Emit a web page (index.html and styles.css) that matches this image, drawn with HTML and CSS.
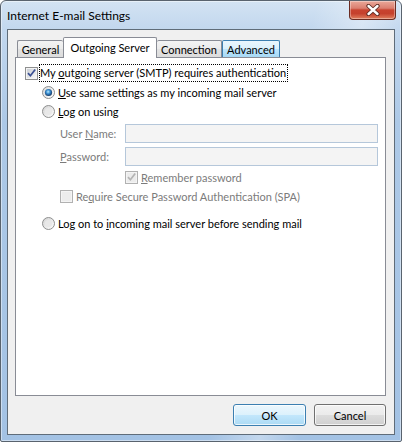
FILE: index.html
```html
<!DOCTYPE html>
<html lang="en">
<head>
    <meta charset="UTF-8">
    <title>Internet E-mail Settings</title>
    <link rel="stylesheet" href="styles.css">
</head>
<body>
    <div class="window">
        <div class="titlebar">
            <span class="title">Internet E-mail Settings</span>
            <div class="close-btn">
                <svg width="16" height="12" viewBox="0 0 16 12">
                    <path d="M3.5 2 L12.5 10 M12.5 2 L3.5 10" stroke="#5a2a22" stroke-width="4.2" stroke-linecap="round" fill="none"/>
                    <path d="M3.5 2 L12.5 10 M12.5 2 L3.5 10" stroke="#ffffff" stroke-width="2.4" stroke-linecap="round" fill="none"/>
                </svg>
            </div>
        </div>

        <div class="client">
            <div class="tabs">
                <div class="tab tab-general">General</div>
                <div class="tab tab-active">Outgoing Server</div>
                <div class="tab tab-connection">Connection</div>
                <div class="tab tab-hover">Advanced</div>
            </div>

            <div class="panel">
                <div class="row row-auth">
                    <svg class="check" width="13" height="13" viewBox="0 0 13 13">
                        <defs>
                            <linearGradient id="cb1" x1="0" y1="0" x2="1" y2="1">
                                <stop offset="0" stop-color="#cbcfd5"/>
                                <stop offset="1" stop-color="#f6f6f6"/>
                            </linearGradient>
                        </defs>
                        <rect x="0.5" y="0.5" width="12" height="12" fill="#f4f4f4" stroke="#8e8f8f"/>
                        <rect x="2" y="2" width="9" height="9" fill="url(#cb1)"/>
                        <path d="M3 6.2 L5.4 8.8 L10.2 2.6" stroke="#3a4f93" stroke-width="1.7" fill="none"/>
                    </svg>
                    <span class="label focus">My <u>o</u>utgoing server (SMTP) requires authentication</span>
                </div>

                <div class="row row-radio row-same">
                    <svg class="radio" width="13" height="13" viewBox="0 0 13 13">
                        <defs>
                            <linearGradient id="rb1" x1="0" y1="0" x2="1" y2="1">
                                <stop offset="0" stop-color="#d8d8d8"/>
                                <stop offset="1" stop-color="#ffffff"/>
                            </linearGradient>
                            <radialGradient id="rd1" cx="0.45" cy="0.4" r="0.6">
                                <stop offset="0" stop-color="#b9ecff"/>
                                <stop offset="0.45" stop-color="#3a8fd2"/>
                                <stop offset="1" stop-color="#12335e"/>
                            </radialGradient>
                        </defs>
                        <circle cx="6.5" cy="6.5" r="6" fill="url(#rb1)" stroke="#8e8f8f"/>
                        <circle cx="6.5" cy="6.5" r="3.6" fill="url(#rd1)"/>
                    </svg>
                    <span class="label"><u>U</u>se same settings as my incoming mail server</span>
                </div>

                <div class="row row-radio row-logon">
                    <svg class="radio" width="13" height="13" viewBox="0 0 13 13">
                        <defs>
                            <linearGradient id="rb2" x1="0" y1="0" x2="1" y2="1">
                                <stop offset="0" stop-color="#d2d2d2"/>
                                <stop offset="1" stop-color="#ffffff"/>
                            </linearGradient>
                        </defs>
                        <circle cx="6.5" cy="6.5" r="6" fill="url(#rb2)" stroke="#8e8f8f"/>
                        <circle cx="6.5" cy="6.5" r="3.6" fill="#e8e8e8"/>
                    </svg>
                    <span class="label"><u>L</u>og on using</span>
                </div>

                <div class="row row-field row-user">
                    <span class="field-label disabled">User <u>N</u>ame:</span>
                    <div class="textbox"></div>
                </div>

                <div class="row row-field row-pass">
                    <span class="field-label disabled"><u>P</u>assword:</span>
                    <div class="textbox"></div>
                </div>

                <div class="row row-remember">
                    <svg class="check" width="13" height="13" viewBox="0 0 13 13">
                        <rect x="0.5" y="0.5" width="12" height="12" fill="#f4f4f4" stroke="#b1b1b1"/>
                        <rect x="2" y="2" width="9" height="9" fill="#ececec"/>
                        <path d="M3 6.2 L5.4 8.8 L10.2 2.6" stroke="#b4b4b4" stroke-width="1.7" fill="none"/>
                    </svg>
                    <span class="label disabled"><u>R</u>emember password</span>
                </div>

                <div class="row row-spa">
                    <svg class="check" width="13" height="13" viewBox="0 0 13 13">
                        <rect x="0.5" y="0.5" width="12" height="12" fill="#f4f4f4" stroke="#b1b1b1"/>
                        <rect x="2" y="2" width="9" height="9" fill="#ececec"/>
                    </svg>
                    <span class="label disabled">Re<u>q</u>uire Secure Password Authentication (SPA)</span>
                </div>

                <div class="row row-radio row-before">
                    <svg class="radio" width="13" height="13" viewBox="0 0 13 13">
                        <defs>
                            <linearGradient id="rb3" x1="0" y1="0" x2="1" y2="1">
                                <stop offset="0" stop-color="#d2d2d2"/>
                                <stop offset="1" stop-color="#ffffff"/>
                            </linearGradient>
                        </defs>
                        <circle cx="6.5" cy="6.5" r="6" fill="url(#rb3)" stroke="#8e8f8f"/>
                        <circle cx="6.5" cy="6.5" r="3.6" fill="#e8e8e8"/>
                    </svg>
                    <span class="label">Log on to <u>i</u>ncoming mail server before sending mail</span>
                </div>
            </div>

            <div class="buttons">
                <button class="btn btn-default">OK</button>
                <button class="btn btn-cancel">Cancel</button>
            </div>
        </div>
    </div>
</body>
</html>
```
FILE: styles.css
```css
body {
    margin: 0;
    padding: 0;
    background: #ffffff;
    font-family: Lato, "Liberation Sans", sans-serif;
    font-size: 11px;
    color: #000;
}

.window {
    width: 402px;
    height: 442px;
    box-sizing: border-box;
    border: 1px solid #59636e;
    border-radius: 6px 6px 2px 2px;
    padding: 0 6px 6px 6px;
    background:
        linear-gradient(104deg, rgba(255,255,255,0) 62%, rgba(255,255,255,0.35) 72%, rgba(255,255,255,0) 80%),
        linear-gradient(to bottom, #d3e3f3 0, #c2d7ee 28px, #adc9e7 120px, #a3c2e4 100%);
    box-shadow: inset 0 0 0 1px rgba(255,255,255,0.45);
}

.titlebar {
    height: 28px;
    display: flex;
    justify-content: space-between;
    align-items: flex-start;
}

.title {
    font-size: 12px;
    padding-top: 7px;
    color: #000;
}

.close-btn {
    width: 47px;
    height: 19px;
    box-sizing: border-box;
    border: 1px solid #6b2c22;
    border-top: none;
    border-radius: 0 0 4px 4px;
    background: linear-gradient(to bottom, #eaa899 0, #db7f70 40%, #c8432f 50%, #c5412d 70%, #e0805f 100%);
    box-shadow: inset 0 0 0 1px rgba(255,255,255,0.35);
    display: flex;
    align-items: center;
    justify-content: center;
    margin-right: -1px;
}

.client {
    width: 388px;
    height: 406px;
    box-sizing: border-box;
    border: 1px solid #5f6c79;
    background: #f0f0f0;
    padding: 7px 8px 0 7px;
}

.tabs {
    display: flex;
    align-items: flex-end;
    height: 20px;
    padding-left: 2px;
}

.tab {
    height: 17px;
    box-sizing: border-box;
    border: 1px solid #898c95;
    border-bottom: none;
    border-radius: 2px 2px 0 0;
    background: linear-gradient(to bottom, #f3f3f3 0, #ebebeb 50%, #e3e3e3 50%, #dcdcdc 100%);
    display: flex;
    align-items: center;
    justify-content: center;
}

.tab-general {
    width: 46px;
    border-right: none;
}

.tab-active {
    width: 94px;
    height: 21px;
    margin-bottom: -1px;
    background: #fff;
    position: relative;
    z-index: 1;
    padding-bottom: 2px;
}

.tab-connection {
    width: 65px;
    border-left: none;
}

.tab-hover {
    width: 58px;
    border-color: #3c7fb1;
    background: linear-gradient(to bottom, #eaf6fd 0, #d9f0fc 50%, #bee6fd 50%, #a7d9f5 100%);
}

.panel {
    height: 339px;
    box-sizing: border-box;
    border: 1px solid #898c95;
    background: #fff;
    padding-top: 6px;
}

.row {
    display: flex;
    align-items: center;
    height: 19px;
}

.row-auth {
    padding-left: 9px;
}

.row-auth .check {
    margin-right: 1px;
}

.row-radio {
    padding-left: 26px;
}

.row-radio .radio {
    margin-right: 3px;
}

.row-user {
    margin-top: 3px;
}

.row-pass {
    margin-top: 4px;
}

.row-field {
    padding-left: 44px;
}

.row-remember {
    margin-top: 2px;
    padding-left: 109px;
}

.row-spa {
    padding-left: 44px;
}

.row-remember .check,
.row-spa .check {
    margin-right: 3px;
}

.row-before {
    margin-top: 8px;
}

.focus {
    border: 1px dotted #000;
    padding: 0 1px 0 0;
    height: 16px;
    line-height: 16px;
    margin-top: -2px;
}

.field-label {
    width: 65px;
}

.disabled {
    color: #7b7b7b;
}

.textbox {
    width: 253px;
    height: 19px;
    box-sizing: border-box;
    border: 1px solid #b5c7da;
    background: #f4f4f4;
}

.buttons {
    display: flex;
    justify-content: flex-end;
    gap: 8px;
    margin-top: 8px;
}

.btn {
    height: 22px;
    box-sizing: border-box;
    border-radius: 3px;
    font-family: Lato, "Liberation Sans", sans-serif;
    font-size: 11px;
    color: #000;
    padding: 0;
    box-shadow: inset 0 0 0 1px rgba(255,255,255,0.75);
}

.btn-default {
    width: 73px;
    border: 1px solid #3c7fb1;
    background: linear-gradient(to bottom, #ecf7fd 0, #dcf1fc 50%, #c3e7fc 50%, #acdaf4 100%);
}

.btn-cancel {
    width: 72px;
    border: 1px solid #707070;
    background: linear-gradient(to bottom, #f2f2f2 0, #ebebeb 50%, #dddddd 50%, #cfcfcf 100%);
}
```
